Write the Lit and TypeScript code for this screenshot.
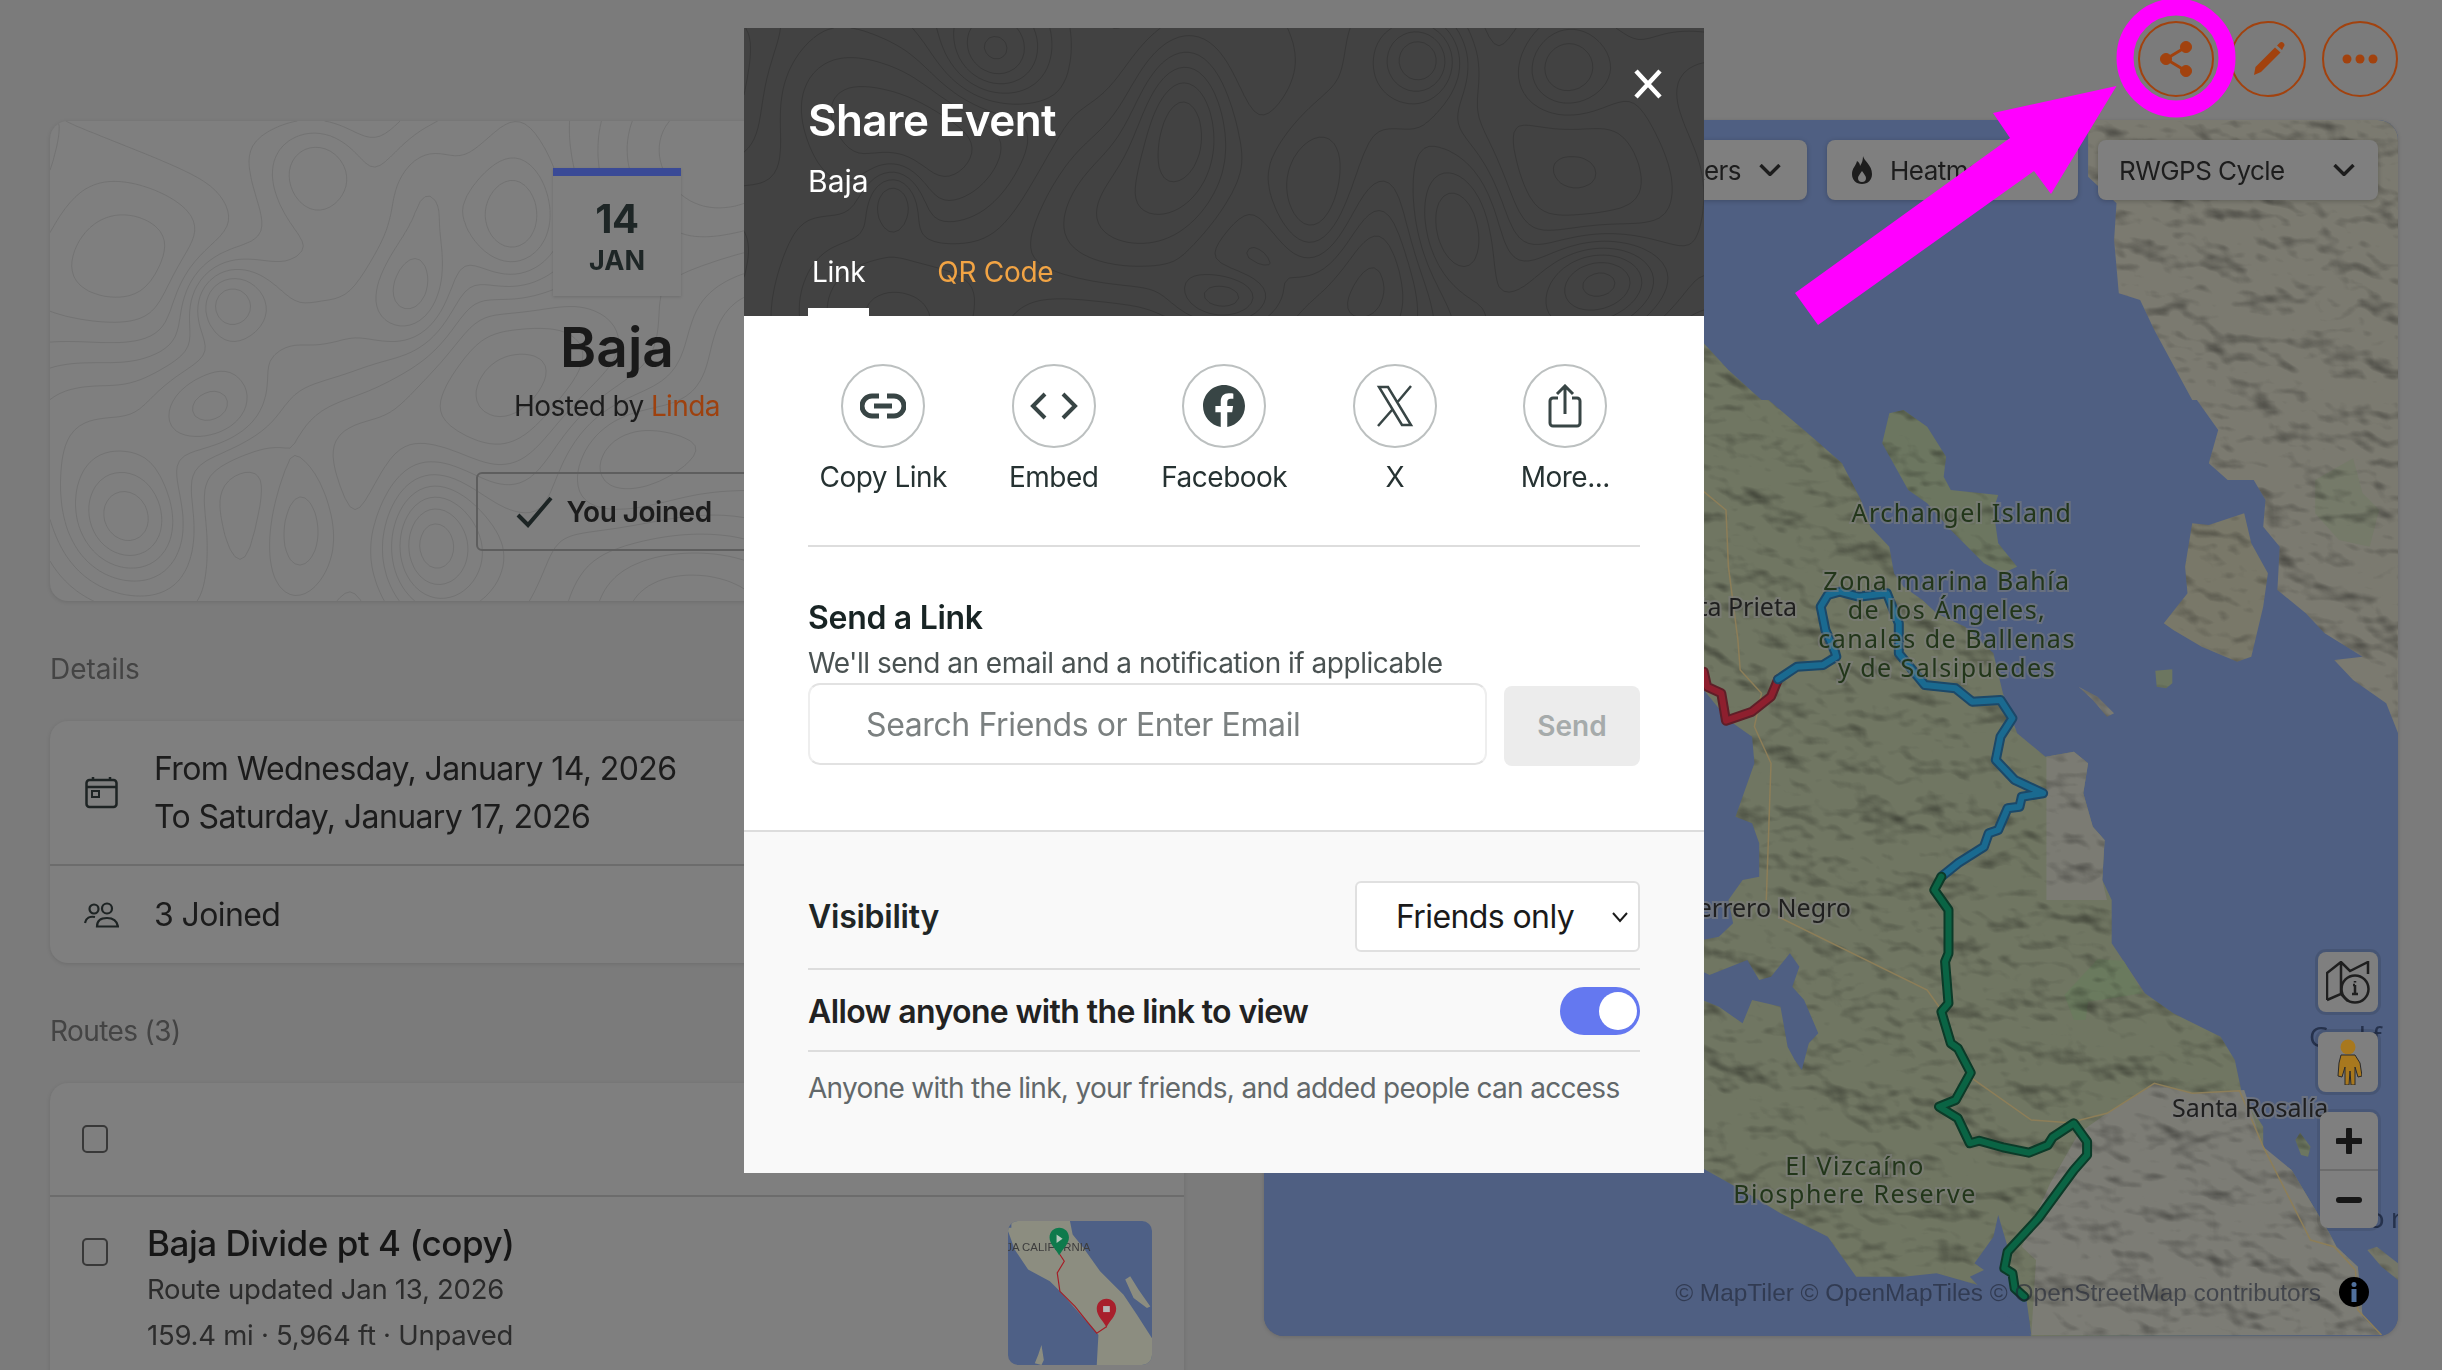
import { LitElement, html, css, svg } from "lit";
import { customElement } from "lit/decorators.js";

type Hill = [number, number, number, number, number];

function contours(w: number, h: number, hills: Hill[], seed: number, levels: number): string {
  const step = 5;
  const f = (x: number, y: number) => {
    let v = 0.34 * Math.sin(x / 93 + y / 71 + seed) + 0.28 * Math.sin(x / 51 - y / 83 + seed * 2) + 0.18 * Math.sin(y / 37 + x / 140);
    for (const [cx, cy, a, sx, sy] of hills) {
      const dx = (x - cx) / sx;
      const dy = (y - cy) / sy;
      v += a * Math.exp(-(dx * dx + dy * dy) / 2);
    }
    return v;
  };
  const cols = Math.ceil(w / step) + 1;
  const rows = Math.ceil(h / step) + 1;
  const grid: number[][] = [];
  for (let j = 0; j <= rows; j++) {
    const r: number[] = [];
    for (let i = 0; i <= cols; i++) r.push(f(i * step, j * step));
    grid.push(r);
  }
  const out: string[] = [];
  for (let l = 0; l < levels; l++) {
    const lv = -1.1 + (l * 3.4) / levels;
    for (let j = 0; j < rows; j++) {
      for (let i = 0; i < cols; i++) {
        const a = grid[j][i], b = grid[j][i + 1], c = grid[j + 1][i + 1], d = grid[j + 1][i];
        const x = i * step, y = j * step;
        const pts: [number, number][] = [];
        if (a < lv !== b < lv) pts.push([x + (step * (lv - a)) / (b - a), y]);
        if (b < lv !== c < lv) pts.push([x + step, y + (step * (lv - b)) / (c - b)]);
        if (d < lv !== c < lv) pts.push([x + (step * (lv - d)) / (c - d), y + step]);
        if (a < lv !== d < lv) pts.push([x, y + (step * (lv - a)) / (d - a)]);
        for (let k = 0; k + 1 < pts.length; k += 2) {
          out.push(`M${pts[k][0].toFixed(1)} ${pts[k][1].toFixed(1)}L${pts[k + 1][0].toFixed(1)} ${pts[k + 1][1].toFixed(1)}`);
        }
      }
    }
  }
  return out.join("");
}

const HEAD_TOPO = contours(960, 288, [
  [680, 30, 1.2, 30, 30], [820, 40, 1.1, 34, 36], [250, 30, 1, 36, 34], [440, 78, 1.3, 36, 60],
  [570, 190, 1.2, 34, 60], [710, 200, 1.3, 36, 50], [860, 250, 1.2, 40, 30], [485, 270, 1, 34, 20], [150, 170, 0.9, 20, 24], [60, 60, -0.8, 60, 50],
], 1.2, 15);
const CARD_TOPO = contours(1134, 480, [
  [270, 50, 1.1, 36, 40], [370, 70, 1, 34, 50], [460, 100, 1.3, 36, 50], [365, 170, 1, 30, 40], [175, 180, 1.3, 30, 30],
  [165, 290, 1.2, 40, 36], [80, 400, 1.4, 46, 44], [250, 400, 1.2, 30, 56], [380, 420, 1.3, 34, 50], [560, 330, 1, 50, 50],
  [720, 200, 1.2, 60, 60], [900, 60, 1.2, 50, 40], [1000, 320, 1.2, 60, 70], [800, 400, 1.1, 50, 40],
], 2.4, 13);

const zp = (oy: number, a: number[]) => {
  const s: string[] = [];
  for (let i = 0; i + 1 < a.length; i += 2) s.push(`${(1700 + a[i] / 2.113).toFixed(1)},${(oy + a[i + 1] / 3).toFixed(1)}`);
  return s.join(" ");
};
const Z3 = 0, Z4 = 400, Z5 = 900;

const LAND_MAIN = [
  zp(Z3, [-40, 990, 8, 1030, 60, 1110, 130, 1200]),
  zp(Z4, [145, 0, 240, 115, 300, 190, 340, 300, 360, 380, 400, 440, 410, 520, 430, 560, 470, 600, 500, 640, 560, 680, 620, 760, 640, 880, 670, 1000, 730, 1070, 790, 1055, 820, 1090, 810, 1180, 830, 1280, 855, 1320, 850, 1440]),
  zp(Z5, [870, 0, 870, 130, 940, 280, 1000, 340, 1100, 410, 1130, 480, 1145, 580, 1190, 680, 1190, 750, 1250, 810, 1330, 1000, 1345, 1040, 1390, 1100, 1400, 1250, 1440, 1305, 700, 1308, 660, 1230, 600, 1160, 500, 1120, 430, 1130, 330, 1130, 270, 1010, 170, 940, 100, 880, 0, 800, -40, 780]),
].join(" ");
const LAND_NE = [
  zp(Z3, [820, 360, 1475, 360, 1475, 1200, 1040, 1200, 960, 990, 930, 900, 885, 880, 875, 720, 880, 610, 820, 530]),
].join(" ");
const LAND_NE2 = [
  zp(Z4, [1050, 0, 1095, 90, 1075, 190, 1115, 240, 1170, 240, 1195, 300, 1190, 380, 1225, 440, 1220, 570, 1280, 640, 1320, 700, 1400, 770, 1340, 780, 1380, 840, 1450, 910, 1475, 1000, 1475, 0]),
].join(" ");
const TIBURON = zp(Z4, [980, 670, 1030, 580, 1025, 500, 1040, 370, 1075, 375, 1150, 340, 1165, 430, 1200, 520, 1190, 620, 1165, 770, 1135, 785, 1060, 740, 1000, 690]);
const ARCHANGEL = zp(Z4, [400, 40, 430, 30, 480, 80, 520, 170, 515, 230, 530, 270, 630, 285, 620, 330, 630, 430, 670, 500, 640, 520, 600, 490, 530, 390, 480, 310, 440, 270, 385, 130]);
const ISLET1 = zp(Z4, [962, 812, 998, 808, 998, 850, 985, 865, 965, 860]);
const ISLET2 = zp(Z4, [800, 860, 840, 890, 875, 940, 860, 950, 830, 900]);
const ISLET3 = zp(Z5, [1268, 698, 1290, 740, 1285, 770, 1270, 765, 1258, 720]);
const ISLET4 = zp(Z5, [1410, 1050, 1430, 1040, 1475, 1090, 1475, 1140, 1440, 1100]);
const GREY_S = zp(Z5, [960, 550, 1040, 580, 1150, 570, 1190, 740, 1250, 810, 1330, 1000, 1345, 1040, 1390, 1100, 1400, 1250, 1440, 1305, 700, 1305, 710, 1080, 680, 1040, 740, 850, 800, 700, 860, 640]);
const GREY_M = [zp(Z4, [732, 1070, 790, 1055, 820, 1090, 810, 1180, 830, 1280, 855, 1320, 850, 1440, 860, 1500, 732, 1500])].join(" ");
const PARK1 = zp(Z5, [840, 178, 895, 182, 935, 280, 820, 305, 815, 360, 790, 360, 770, 285]);
const PARK2 = zp(Z4, [1380, 175, 1400, 280, 1435, 330, 1415, 440, 1350, 420, 1300, 340, 1300, 240]);
const INLET1 = zp(Z4, [-30, 860, 8, 870, 60, 960, 110, 1010, 115, 1090, 75, 1250, 110, 1270, 125, 1330, 125, 1430, 90, 1440, 60, 1500, 20, 1500, -30, 1500]);
const LAGOON0 = zp(Z5, [-30, 0, 60, 0, 70, 70, 40, 110, -30, 130]);
const LAGOON1 = zp(Z5, [-30, 190, 20, 225, 100, 180, 125, 240, 150, 230, 190, 160, 210, 200, 195, 260, 220, 300, 250, 400, 230, 430, 215, 510, 200, 480, 185, 440, 170, 320, 110, 300, 90, 370, 40, 320, -30, 280]);
const LAGOON2 = zp(Z5, [630, 945, 650, 1040, 640, 1100, 690, 1200, 700, 1305, 650, 1250, 590, 1160, 570, 1130, 600, 1110, 580, 1090, 620, 1010]);

const RED = zp(Z4, [8, 815, 15, 860, 45, 880, 55, 962, 110, 935, 150, 890, 165, 838]);
const BLUE = zp(Z4, [165, 838, 205, 800, 260, 795, 288, 770, 285, 755, 265, 690, 255, 620, 270, 585, 295, 575, 335, 590, 395, 580, 420, 670, 420, 760, 475, 855, 540, 865, 575, 905, 635, 900, 660, 955, 635, 1010, 625, 1080, 665, 1140, 725, 1180, 680, 1190, 675, 1220, 650, 1225, 630, 1290, 610, 1300, 600, 1340, 545, 1390, 510, 1430]);
const GREEN = [
  zp(Z4, [510, 1430, 495, 1470]),
  zp(Z5, [510, 0, 525, 30, 525, 160, 518, 185, 525, 310, 510, 335, 530, 430, 545, 445, 572, 518, 540, 600, 505, 620, 545, 655, 570, 730, 590, 722, 640, 742, 695, 758, 735, 735, 745, 712, 790, 670, 818, 725, 818, 765, 790, 810, 715, 955, 650, 1055, 643, 1105, 660, 1120, 665, 1165, 685, 1190]),
].join(" ");
const ROAD1 = zp(Z4, [8, 275, 55, 330, 60, 500, 80, 720, 85, 810, 130, 880, 115, 980, 150, 1090, 140, 1500]);
const ROAD2 = zp(Z5, [165, 50, 480, 270, 505, 320]);
const ROAD3 = zp(Z5, [575, 535, 700, 660, 780, 668, 860, 640, 960, 550, 1040, 580, 1140, 572, 1190, 740, 1290, 1020, 1340, 1040, 1385, 1110, 1390, 1230, 1440, 1305]);

@customElement("app-root")
export class AppRoot extends LitElement {
  static styles = css`
    :host { display: block; font-family: Inter, "Noto Sans", "Liberation Sans", sans-serif; }
    .page { position: relative; height: 1370px; overflow: hidden; background: #7b7b7b; color: #1c1c1c; box-sizing: border-box; padding: 0 44px 0 50px; }
    .topbar { height: 120px; display: flex; justify-content: flex-end; align-items: flex-start; gap: 16px; padding-top: 21px; box-sizing: border-box; }
    .act { width: 76px; height: 76px; border-radius: 50%; border: 2px solid #a2420e; box-sizing: border-box; display: flex; align-items: center; justify-content: center; }
    .act svg { display: block; }
    .main { display: flex; gap: 80px; align-items: flex-start; }
    .left { width: 1134px; flex: none; }
    .hero { position: relative; height: 480px; margin-top: 1px; border-radius: 18px; background: #7f7f7f; box-shadow: 0 1px 4px rgba(0,0,0,.12); overflow: hidden; display: flex; flex-direction: column; align-items: center; padding-top: 47px; box-sizing: border-box; }
    .topo { position: absolute; inset: 0; width: 100%; height: 100%; }
    .topo path { fill: none; stroke: #737373; stroke-width: 1; }
    .hero > *:not(.topo) { position: relative; }
    .badge { width: 128px; height: 128px; background: #7f7f7f; border-top: 8px solid #3a4a96; box-sizing: border-box; box-shadow: 0 1px 3px rgba(0,0,0,.14); display: flex; flex-direction: column; align-items: center; color: #1e2626; }
    .day { font-size: 40px; font-weight: 700; line-height: 44px; margin-top: 21px; letter-spacing: -.5px; }
    .mon { font-size: 27px; font-weight: 700; line-height: 36px; margin-top: 2px; }
    .hero h1 { margin: 16px 0 0; font-size: 55px; line-height: 70px; font-weight: 600; color: #1a1a1a; }
    .hosted { font-size: 28px; line-height: 40px; margin-top: 4px; color: #1c1c1c; letter-spacing: -.6px; }
    .hosted b { font-weight: 400; color: #9e410e; }
    .joined { width: 282px; height: 79px; box-sizing: border-box; margin-top: 46px; padding-right: 6px; border: 2px solid #5e5e5e; border-radius: 6px; display: flex; align-items: center; justify-content: center; gap: 12px; font-size: 28px; font-weight: 600; color: #1c1c1c; letter-spacing: -.5px; }
    .label { font-size: 28px; line-height: 40px; color: #444; }
    .l1 { margin-top: 48px; }
    .l2 { margin-top: 48px; letter-spacing: -.6px; }
    .card { background: #7f7f7f; border-radius: 18px; box-shadow: 0 1px 4px rgba(0,0,0,.12); }
    .c1 { margin-top: 32px; }
    .c2 { margin-top: 32px; height: 400px; }
    .drow { display: flex; align-items: center; padding-left: 34px; gap: 35px; font-size: 32px; line-height: 48px; color: #1c1c1c; letter-spacing: -.6px; }
    .drow.a { height: 143px; border-bottom: 2px solid #6c6c6c; }
    .drow.b { height: 97px; }
    .drow svg { width: 35px; flex: none; }
    .rhead { height: 112px; border-bottom: 2px solid #6c6c6c; padding-left: 32px; display: flex; align-items: center; }
    .cb { width: 26px; height: 28px; border: 2px solid #383838; border-radius: 5px; box-sizing: border-box; flex: none; }
    .rrow { display: flex; padding: 24px 32px 0; gap: 39px; }
    .rrow .cb { margin-top: 17px; }
    .rtext { flex: 1; margin-top: -1px; }
    .rt { font-size: 35px; line-height: 46px; font-weight: 500; color: #161616; letter-spacing: -.48px; }
    .rs { font-size: 27.5px; line-height: 46px; color: #2c2c2c; letter-spacing: -.25px; }
    .thumb { width: 144px; height: 144px; border-radius: 10px; overflow: hidden; flex: none; }
    .thumb svg { display: block; width: 144px; height: 144px; }

    .map { position: relative; width: 1134px; height: 1216px; flex: none; border-radius: 20px; overflow: hidden; background: #4f5f82; box-shadow: 0 1px 4px rgba(0,0,0,.15); }
    .mapsvg { position: absolute; inset: 0; width: 1134px; height: 1216px; }
    .hillg { mix-blend-mode: multiply; }
    .rd { fill: none; stroke: #8d7e58; stroke-width: 1.5; }
    .ro { fill: none; stroke-width: 10; stroke-linejoin: round; stroke-linecap: round; }
    .ri { fill: none; stroke-width: 6; stroke-linejoin: round; stroke-linecap: round; }
    .ml { font-family: "Noto Sans", sans-serif; font-size: 25px; letter-spacing: 1.5px; fill: #22361a; paint-order: stroke; stroke: rgba(125,125,125,.55); stroke-width: 4px; text-anchor: middle; }
    .mc { font-family: "Noto Sans", sans-serif; font-size: 25px; fill: #1f1f1f; paint-order: stroke; stroke: rgba(125,125,125,.6); stroke-width: 4px; }
    .mw { font-family: "Noto Sans", sans-serif; font-size: 28px; letter-spacing: 6px; fill: #26324c; }
    .attr { position: absolute; right: 77px; top: 1156px; font: 24.4px/34px "Liberation Sans", Arial, sans-serif; color: rgba(30,35,50,.6); white-space: nowrap; }
    .tools { position: absolute; top: 20px; right: 20px; display: flex; gap: 20px; }
    .tool { height: 60px; border-radius: 8px; background: #7f7f7f; box-shadow: 0 1px 5px rgba(0,0,0,.22); display: flex; align-items: center; font-size: 26px; letter-spacing: -.55px; color: #1d1d1d; box-sizing: border-box; }
    .t1 { width: 240px; gap: 18px; justify-content: flex-end; padding-right: 26px; }
    .t2 { width: 251px; padding-left: 25px; gap: 18px; }
    .t3 { width: 280px; padding: 0 23px 0 21px; justify-content: space-between; }
    .ctrls { position: absolute; right: 20px; top: 832px; width: 60px; display: flex; flex-direction: column; gap: 20px; align-items: flex-end; }
    .ctl { width: 60px; height: 60px; border-radius: 8px; background: #7f7f7f; box-shadow: 0 0 0 3px rgba(0,0,0,.1); display: flex; align-items: center; justify-content: center; }
    .zoom { width: 58px; height: 116px; border-radius: 8px; background: #7f7f7f; box-shadow: 0 0 0 3px rgba(0,0,0,.08); display: flex; flex-direction: column; }
    .zoom div { flex: 1; display: flex; align-items: center; justify-content: center; }
    .zoom div + div { border-top: 2px solid #6c6c6c; }
    .infoi { position: absolute; left: 1074px; top: 1156px; width: 32px; height: 32px; }

    .modal { position: absolute; left: 744px; top: 28px; width: 960px; background: #fff; display: flex; flex-direction: column; }
    .mhead { position: relative; height: 288px; background: #424242; color: #fff; padding: 66px 40px 0 64px; box-sizing: border-box; display: flex; flex-direction: column; overflow: hidden; }
    .mhead .topo path { stroke: #383838; }
    .mhead > *:not(.topo) { position: relative; }
    .close { position: absolute !important; left: 888px; top: 40px; width: 32px; height: 32px; }
    .mhead h2 { margin: 0; font-size: 44px; line-height: 52px; font-weight: 600; letter-spacing: -.6px; }
    .sub { font-size: 30px; line-height: 40px; margin-top: 15px; }
    .tabs { margin-top: auto; display: flex; gap: 64px; letter-spacing: -.3px; }
    .tab { font-size: 28px; line-height: 40px; padding: 0 4px 16px; border-bottom: 8px solid transparent; color: #f2a444; }
    .tab.on { color: #fff; border-bottom-color: #fff; }
    .mbody { padding: 48px 64px 0; }
    .share { display: grid; grid-template-columns: repeat(5, 170.5px); margin: 0 -10px; padding-bottom: 48px; }
    .sitem { display: flex; flex-direction: column; align-items: center; gap: 9px; font-size: 28px; line-height: 40px; color: #263232; white-space: nowrap; letter-spacing: -.5px; }
    .circ { width: 84px; height: 84px; border-radius: 50%; border: 2px solid #bcc0c0; box-sizing: border-box; display: flex; align-items: center; justify-content: center; }
    .circ svg { display: block; }
    .send { border-top: 2px solid #ddd; padding: 51px 0 64px; }
    .send h3 { margin: 0; font-size: 32px; line-height: 40px; font-weight: 600; color: #182424; letter-spacing: -.3px; }
    .desc { font-size: 28px; line-height: 36px; margin-top: 7px; color: #4a5252; letter-spacing: -.49px; }
    .srow { display: flex; gap: 17px; margin-top: 2px; align-items: flex-start; }
    .inp { width: 679px; height: 82px; box-sizing: border-box; border: 2px solid #e2e2e2; border-left-color: #eee; border-right-color: #eee; border-radius: 12px; padding: 0 0 0 56px; font: 32px Inter, sans-serif; letter-spacing: -.38px; outline: none; background: #fff; }
    .inp::placeholder { color: #7b8080; opacity: 1; }
    .sbtn { width: 136px; height: 80px; margin-top: 3px; border-radius: 8px; background: #ececec; color: #a6abab; font-size: 28px; font-weight: 600; display: flex; align-items: center; justify-content: center; }
    .mfoot { background: #f9f9f9; border-top: 2px solid #ddd; padding: 49px 64px 67px; }
    .vrow { display: flex; justify-content: space-between; align-items: center; padding-bottom: 16px; border-bottom: 2px solid #ddd; font-size: 32px; font-weight: 600; color: #1f2626; letter-spacing: -.25px; }
    .sel { width: 285px; height: 71px; box-sizing: border-box; border: 2px solid #e0e0e0; border-radius: 6px; background: #fff; display: flex; align-items: center; padding: 0 9px 0 39px; justify-content: space-between; font-size: 32px; font-weight: 400; color: #1a1a1a; letter-spacing: -.6px; }
    .arow { display: flex; justify-content: space-between; align-items: center; padding: 17px 0 15px; border-bottom: 2px solid #ddd; font-size: 32px; font-weight: 600; color: #222; letter-spacing: -.62px; }
    .tog { width: 80px; height: 48px; border-radius: 24px; background: #6478f0; display: flex; justify-content: flex-end; align-items: center; padding-right: 3px; box-sizing: border-box; }
    .tog i { width: 38px; height: 38px; border-radius: 50%; background: #fff; display: block; }
    .note { font-size: 28px; line-height: 36px; margin-top: 18px; color: #62686a; letter-spacing: -.7px; white-space: nowrap; }
    .callout { position: absolute; left: 0; top: 0; width: 2442px; height: 1370px; pointer-events: none; }
  `;

  private chev(stroke: string, w = 22, h = 12, sw = 3.4) {
    return html`<svg width=${w} height=${h} viewBox="0 0 22 12" fill="none" stroke=${stroke} stroke-width=${sw}><path d="M1.5 1l9.5 9.5L20.5 1"/></svg>`;
  }

  private mapSvg() {
    const landShapes = [LAND_MAIN, LAND_NE, LAND_NE2, TIBURON, ARCHANGEL, ISLET1, ISLET2, ISLET3, ISLET4];
    return svg`<svg class="mapsvg" viewBox="1264 120 1134 1216" xmlns="http://www.w3.org/2000/svg">
      <defs>
        <filter id="hs" x="0" y="0" width="100%" height="100%" color-interpolation-filters="sRGB">
          <feTurbulence type="fractalNoise" baseFrequency=".02 .028" numOctaves="3" seed="7" result="n"/>
          <feDiffuseLighting in="n" surfaceScale="5" diffuseConstant="1.24" lighting-color="#fff"><feDistantLight azimuth="300" elevation="55"/></feDiffuseLighting>
        </filter>
        <clipPath id="landclip">${landShapes.map((p) => svg`<polygon points=${p}/>`)}</clipPath>
      </defs>
      <rect x="1264" y="120" width="1134" height="1216" fill="#4f5f82"/>
      <polygon points=${LAND_MAIN} fill="#707662"/>
      <polygon points=${GREY_M} fill="#7b7b73"/>
      <polygon points=${GREY_S} fill="#7c7c75"/>
      <polygon points=${PARK1} fill="#6a7a5e"/>
      <polygon points=${LAND_NE} fill="#7b7a70"/>
      <polygon points=${LAND_NE2} fill="#7b7a70"/>
      <polygon points=${PARK2} fill="#757a69"/>
      <polygon points=${TIBURON} fill="#797869"/>
      <polygon points=${ARCHANGEL} fill="#6c7660"/>
      <polygon points=${ISLET1} fill="#6c7660"/>
      <polygon points=${ISLET2} fill="#7a7a72"/>
      <polygon points=${ISLET3} fill="#6c7660"/>
      <polygon points=${ISLET4} fill="#747668"/>
      <g class="hillg" clip-path="url(#landclip)"><rect x="1264" y="120" width="1134" height="1216" filter="url(#hs)"/></g>
      <polygon points=${INLET1} fill="#4f5f82"/>
      <polygon points=${LAGOON0} fill="#4f5f82"/>
      <polygon points=${LAGOON1} fill="#4f5f82"/>
      <polygon points=${LAGOON2} fill="#4f5f82"/>
      <polyline class="rd" points=${ROAD1}/><polyline class="rd" points=${ROAD2}/><polyline class="rd" points=${ROAD3}/>
      <polyline class="ro" points=${RED} stroke="#5e1f28"/><polyline class="ri" points=${RED} stroke="#8e1f2e"/>
      <polyline class="ro" points=${BLUE} stroke="#1c4868"/><polyline class="ri" points=${BLUE} stroke="#1a6a90"/>
      <polyline class="ro" points=${GREEN} stroke="#0c3a28"/><polyline class="ri" points=${GREEN} stroke="#0a6444"/>
      <text class="ml" x="1962" y="522">Archangel Island</text>
      <text class="ml" x="1947" y="590">Zona marina Bahía</text>
      <text class="ml" x="1947" y="619">de los Ángeles,</text>
      <text class="ml" x="1947" y="648">canales de Ballenas</text>
      <text class="ml" x="1947" y="677">y de Salsipuedes</text>
      <text class="ml" x="1855" y="1175">El Vizcaíno</text>
      <text class="ml" x="1855" y="1203">Biosphere Reserve</text>
      <text class="mc" x="1797" y="616" text-anchor="end">Punta Prieta</text>
      <text class="mc" x="1851" y="917" text-anchor="end">Guerrero Negro</text>
      <text class="mc" x="2172" y="1117">Santa Rosalía</text>
      <text class="mw" x="2309" y="1047">Gulf of California</text>
      <text class="mw" x="2344" y="1228">Cortez</text>
    </svg>`;
  }

  render() {
    return html`<div class="page">
      <div class="topbar">
        <div class="act"><svg width="40" height="40" viewBox="0 0 40 40"><g fill="#a2420e" stroke="#a2420e"><path d="M10 20L30 8M10 20l20 12" stroke-width="3" fill="none"/><circle cx="10" cy="20" r="5.5"/><circle cx="30" cy="8" r="5.5"/><circle cx="30" cy="32" r="5.5"/></g></svg></div>
        <div class="act"><svg width="40" height="40" viewBox="0 0 40 40"><path d="M6 36l1.500-8L27 8.500l5.500 5L13 33z" fill="#a2420e"/><path d="M29 6.500l2.500-2.500a2.500 2.500 0 0 1 4 4L34 11z" fill="#a2420e"/></svg></div>
        <div class="act"><svg width="36" height="10" viewBox="0 0 36 10"><g fill="#a2420e"><circle cx="5" cy="5" r="4.500"/><circle cx="18" cy="5" r="4.500"/><circle cx="31" cy="5" r="4.500"/></g></svg></div>
      </div>
      <div class="main">
        <div class="left">
          <div class="hero">
            <svg class="topo" viewBox="0 0 1134 480"><path d=${CARD_TOPO}/></svg>
            <div class="badge"><div class="day">14</div><div class="mon">JAN</div></div>
            <h1>Baja</h1>
            <div class="hosted">Hosted by <b>Linda</b></div>
            <div class="joined"><svg width="38" height="32" viewBox="0 0 38 32" fill="none" stroke="#1c2424" stroke-width="4"><path d="M2 19l10 10L35 2"/></svg>You Joined</div>
          </div>
          <div class="label l1">Details</div>
          <div class="card c1">
            <div class="drow a">
              <svg height="33" viewBox="0 0 35 33" fill="none" stroke="#1e2424" stroke-width="2.500"><rect x="2.500" y="4" width="30" height="27" rx="3"/><path d="M2.500 11h30M9 1v4M26 1v4"/><rect x="8" y="15" width="7" height="6" stroke-width="2"/></svg>
              <div>From Wednesday, January 14, 2026<br/>To Saturday, January 17, 2026</div>
            </div>
            <div class="drow b">
              <svg height="26" viewBox="0 0 35 26" fill="none" stroke="#1e2424" stroke-width="2.200"><circle cx="10" cy="7" r="4.500"/><circle cx="23" cy="6.500" r="5"/><path d="M1 21c1-5 5-7 10-6M13 24.500c0-6 4-8.500 10-8.500s10 3 11 8.500z"/></svg>
              <div>3 Joined</div>
            </div>
          </div>
          <div class="label l2">Routes (3)</div>
          <div class="card c2">
            <div class="rhead"><div class="cb"></div></div>
            <div class="rrow">
              <div class="cb"></div>
              <div class="rtext">
                <div class="rt">Baja Divide pt 4 (copy)</div>
                <div class="rs">Route updated Jan 13, 2026</div>
                <div class="rs">159.4 mi · 5,964 ft · Unpaved</div>
              </div>
              <div class="thumb"><svg viewBox="175 90 430 430">
                <rect x="175" y="90" width="430" height="430" fill="#4e6086"/>
                <polygon points="185,90 360,90 368,130 400,170 450,240 520,310 560,370 605,440 605,520 440,520 445,430 410,390 330,300 300,270 235,235 195,175 175,120 175,110 185,110" fill="#8c8d80"/>
                <polygon points="525,265 540,255 565,295 600,345 590,350 550,320" fill="#8c8d80"/>
                <polygon points="255,515 265,490 275,460 282,505 275,520" fill="#8c8d80"/>
                <text x="170" y="180" font-family="Liberation Sans, sans-serif" font-size="34" fill="#3c3c3c">JA CALIFORNIA</text>
                <polyline points="330,190 343,210 322,245 330,300 375,345 415,395 440,425 470,405" fill="none" stroke="#a51d26" stroke-width="3.500"/>
                <path d="M328 110c-17 0-29 13-29 29 0 20 20 35 29 54 9-19 29-34 29-54 0-16-12-29-29-29z" fill="#0e7a4c"/><path d="M320 130l18 13-18 13z" fill="#b5c8bc"/>
                <path d="M469 322c-17 0-29 13-29 30 0 22 20 36 29 56 9-20 29-34 29-56 0-17-12-30-29-30z" fill="#a81f2c"/><rect x="459" y="344" width="20" height="18" fill="#b6b6b6"/>
              </svg></div>
            </div>
          </div>
        </div>
        <div class="map">
          ${this.mapSvg()}
          <div class="tools">
            <div class="tool t1"><span>Markers</span>${this.chev("#1d1d1d")}</div>
            <div class="tool t2"><svg width="20" height="28" viewBox="0 0 20 28"><path d="M11 0c1 5 9 9 9 18 0 6-4 10-10 10S0 24 0 18C0 12 4 10 5 5c2 1 3 3 3 5 2-3 3-6 3-10z" fill="#1d1d1d"/><path d="M10 15c2 3 4 5 4 7a4 4 0 0 1-8 0c0-2 2-4 4-7z" fill="#7f7f7f"/></svg><span>Heatmaps</span></div>
            <div class="tool t3"><span>RWGPS Cycle</span>${this.chev("#1d1d1d")}</div>
          </div>
          <div class="ctrls">
            <div class="ctl"><svg width="44" height="43" viewBox="0 0 44 43" fill="none" stroke="#1f1f1f" stroke-width="2.500"><path d="M1 39V12L15 1l9 9 18-9v12M15 1v32L1 39M15 33l7 7"/><circle cx="29" cy="28" r="13.500"/><path d="M29 24v9M26 33h6M27 24h2M29 20v1.500"/></svg></div>
            <div class="ctl"><svg width="28" height="46" viewBox="0 0 28 46"><circle cx="14" cy="8" r="7.500" fill="#a8781e"/><path d="M7 16h14l5 8 2 13-4 1-3-10v18h-4l-1-14-1 14H11V28L8 38l-4-1 1-13z" fill="#a8781e" stroke="#2a2a2a" stroke-width="1"/></svg></div>
            <div class="zoom"><div><svg width="26" height="26" viewBox="0 0 26 26"><path d="M13 2v22M2 13h22" stroke="#161616" stroke-width="6" stroke-linecap="round"/></svg></div><div><svg width="26" height="8" viewBox="0 0 26 8"><path d="M3 4h20" stroke="#161616" stroke-width="6" stroke-linecap="round"/></svg></div></div>
          </div>
          <div class="attr">© MapTiler © OpenMapTiles © OpenStreetMap contributors</div>
          <svg class="infoi" viewBox="0 0 32 32"><circle cx="16" cy="16" r="15" fill="#000"/><circle cx="16" cy="8.500" r="2.500" fill="#4f6f9c"/><rect x="13.500" y="13" width="5" height="13" fill="#4f6f9c"/></svg>
        </div>
      </div>

      <div class="modal">
        <div class="mhead">
          <svg class="topo" viewBox="0 0 960 288"><path d=${HEAD_TOPO}/></svg>
          <svg class="close" viewBox="0 0 32 32" fill="none" stroke="#fff" stroke-width="4.500"><path d="M4 3l24 26M28 3L4 29"/></svg>
          <h2>Share Event</h2>
          <div class="sub">Baja</div>
          <div class="tabs"><div class="tab on">Link</div><div class="tab">QR Code</div></div>
        </div>
        <div class="mbody">
          <div class="share">
            <div class="sitem"><div class="circ"><svg width="46" height="26" viewBox="0 0 46 26" fill="none" stroke="#384545" stroke-width="5"><path d="M19 3h-7a10 10 0 0 0 0 20h7M27 3h7a10 10 0 0 1 0 20h-7M14 13h18"/></svg></div>Copy Link</div>
            <div class="sitem"><div class="circ"><svg width="48" height="28" viewBox="0 0 48 28" fill="none" stroke="#384545" stroke-width="4"><path d="M15 2L3 14l12 12M33 2l12 12-12 12"/></svg></div>Embed</div>
            <div class="sitem"><div class="circ"><svg width="42" height="42" viewBox="0 0 24 24"><path fill="#384545" d="M24 12.070C24 5.400 18.630 0 12 0S0 5.400 0 12.070c0 6.020 4.390 11.020 10.130 11.930v-8.440H7.080v-3.490h3.050V9.410c0-3.030 1.790-4.700 4.530-4.700 1.310 0 2.680.24 2.680.24v2.970h-1.510c-1.490 0-1.960.93-1.960 1.890v2.260h3.330l-.53 3.490h-2.800V24C19.610 23.090 24 18.090 24 12.070z"/></svg></div>Facebook</div>
            <div class="sitem"><div class="circ"><svg width="40" height="44" viewBox="0 0 40 44" fill="none" stroke="#384545" stroke-width="2.500"><path d="M4 3h9l23 38h-9zM36 2L23 17.500M3 42l14-16"/></svg></div>X</div>
            <div class="sitem"><div class="circ"><svg width="34" height="44" viewBox="0 0 34 44" fill="none" stroke="#384545" stroke-width="3"><path d="M10 14H5a3 3 0 0 0-3 3v22a3 3 0 0 0 3 3h24a3 3 0 0 0 3-3V17a3 3 0 0 0-3-3h-5M17 30V3M9 10l8-8 8 8"/></svg></div>More...</div>
          </div>
          <div class="send">
            <h3>Send a Link</h3>
            <div class="desc">We'll send an email and a notification if applicable</div>
            <div class="srow"><input class="inp" placeholder="Search Friends or Enter Email"/><div class="sbtn">Send</div></div>
          </div>
        </div>
        <div class="mfoot">
          <div class="vrow"><span>Visibility</span><div class="sel"><span>Friends only</span><svg width="18" height="12" viewBox="0 0 18 12" fill="none" stroke="#1a1a1a" stroke-width="2"><path d="M2 2l7 8 7-8"/></svg></div></div>
          <div class="arow"><span>Allow anyone with the link to view</span><div class="tog"><i></i></div></div>
          <div class="note">Anyone with the link, your friends, and added people can access</div>
        </div>
      </div>

      <svg class="callout" viewBox="0 0 2442 1370"><circle cx="2176" cy="58" r="51" fill="none" stroke="#ff00ff" stroke-width="17"/><polygon points="2116.5,86 1993,113 2010,138 1795,293 1818,325 2034,171 2051,194" fill="#ff00ff"/></svg>
    </div>`;
  }
}
